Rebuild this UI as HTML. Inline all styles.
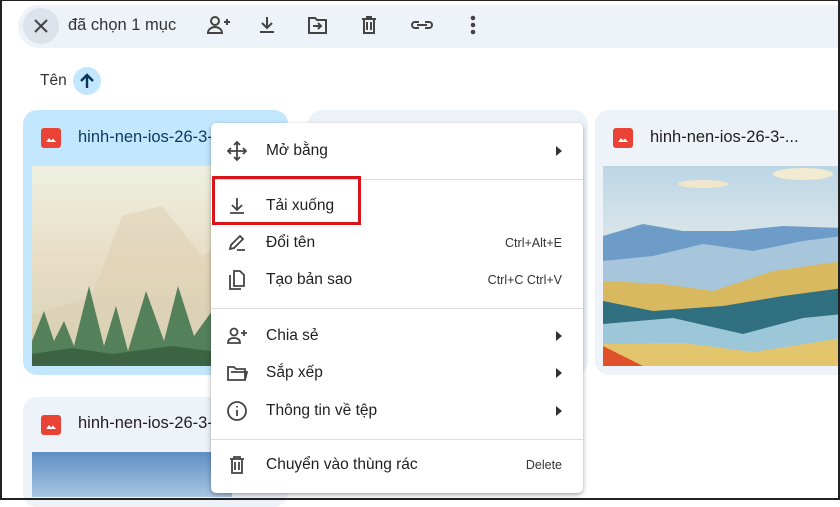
<!DOCTYPE html>
<html><head><meta charset="utf-8"><style>
*{margin:0;padding:0;box-sizing:border-box}
body{width:840px;height:500px;overflow:hidden;background:#fff;font-family:"Liberation Sans",Arial,sans-serif;position:relative;color:#1f1f1f}
.frame{position:absolute;inset:0;border:2px solid #222;border-top-width:1px;border-right-width:2px;z-index:50;pointer-events:none}
.abs{position:absolute}
.bar{left:18px;top:5px;width:840px;height:43px;background:#eef2f9;border-radius:22px}
.close{left:23px;top:8px;width:36px;height:36px;border-radius:50%;background:#dde3ea}
.card{position:absolute;border-radius:14px}
.menu{left:211px;top:123px;width:372px;height:370px;background:#fff;border-radius:5px;box-shadow:0 2px 6px rgba(0,0,0,.25),0 1px 2px rgba(0,0,0,.15);z-index:10}
.it{position:absolute;left:0;width:100%;height:30px;font-size:15.5px;color:#1f1f1f}
.it .t{position:absolute;left:55px;top:6px}
.it svg{position:absolute;left:15px;top:4px}
.it .k{position:absolute;right:21px;top:8px;font-size:12.5px;color:#333}
.it .ar{position:absolute;right:21px;top:10px;width:0;height:0;border-left:6px solid #333;border-top:5px solid transparent;border-bottom:5px solid transparent}
.hr{position:absolute;left:0;width:100%;height:1px;background:#dadce0}
.ficon{width:20px;height:20px;background:#ea4335;border-radius:3px;overflow:hidden}
.title{font-size:16.5px;color:#0b3a5c}
</style></head><body>
<div class="frame"></div>
<div class="abs bar"></div>
<div class="abs close"></div>
<svg class="abs" style="left:31px;top:16px" width="20" height="20" viewBox="0 0 20 20"><path d="M4 4L16 16M16 4L4 16" stroke="#444" stroke-width="2"/></svg>
<div class="abs" style="left:68px;top:16px;font-size:16.5px;color:#333">đã chọn 1 mục</div>
<svg class="abs" style="left:205px;top:13px" width="280" height="24" viewBox="0 0 280 24" fill="none" stroke="#444" stroke-width="2">
<circle cx="10" cy="8" r="4"/><path d="M3 20c0-4 4-6 7-6s7 2 7 6z"/><path d="M19 9h6M22 6v6"/>
<path d="M62 4v11M57 10l5 5 5-5M55 19h14"/>
<path d="M104 5h6l2 2h9v13h-17z"/><path d="M108 13h8M113 10l3 3-3 3"/>
<path d="M157 6h14M162 6V4h4v2M159 6v14h10V6M162 9v8M166 9v8"/>
<path d="M214 9h-4a3 3 0 0 0 0 6h4M220 9h4a3 3 0 0 1 0 6h-4M212 12h10"/>
<circle cx="268" cy="5" r="1.3" fill="#444"/><circle cx="268" cy="12" r="1.3" fill="#444"/><circle cx="268" cy="19" r="1.3" fill="#444"/>
</svg>
<div class="abs" style="left:40px;top:72px;font-size:15.5px;color:#333">Tên</div>
<div class="abs" style="left:73px;top:67px;width:28px;height:28px;border-radius:50%;background:#c2e7ff"></div>
<svg class="abs" style="left:77px;top:71px" width="20" height="20"><path d="M10 17V4M4 10l6-6 6 6" stroke="#0a3558" stroke-width="2.4" fill="none"/></svg>

<div class="card" style="left:23px;top:110px;width:265px;height:265px;background:#c2e7ff"></div>
<svg class="abs" style="left:41px;top:128px" width="20" height="20"><rect width="20" height="20" rx="3" fill="#ea4335"/><path d="M5 14l3-4 2 2.5 2-2 3 3.5z" fill="#fff"/></svg>
<div class="abs title" style="left:78px;top:128px">hinh-nen-ios-26-3-...</div>
<svg class="abs" style="left:32px;top:166px" width="200" height="200" viewBox="0 0 200 200">
<defs><linearGradient id="f" x1="0" y1="0" x2="0" y2="1"><stop offset="0" stop-color="#eef0e0"/><stop offset=".5" stop-color="#e8dcc4"/><stop offset="1" stop-color="#d2d3b6"/></linearGradient></defs>
<rect width="200" height="200" fill="url(#f)"/>
<path d="M60 130L90 50 130 40 170 90 200 70V200H0V150z" fill="#dccdb0" opacity=".45"/>
<path d="M0 200V175l12-30 10 30 10-20 10 25 15-60 15 60 12-40 12 45 18-60 18 50 14-55 16 50 18-25 20 40V200z" fill="#54805a"/>
<path d="M0 200v-12l40-6 40 6 60-8 60 8V200z" fill="#3d6442"/>
</svg>

<div class="card" style="left:308px;top:110px;width:280px;height:265px;background:#eef2f9"></div>

<div class="card" style="left:595px;top:110px;width:260px;height:265px;background:#eef2f9"></div>
<svg class="abs" style="left:613px;top:128px" width="20" height="20"><rect width="20" height="20" rx="3" fill="#ea4335"/><path d="M5 14l3-4 2 2.5 2-2 3 3.5z" fill="#fff"/></svg>
<div class="abs" style="left:650px;top:128px;font-size:16.5px;color:#1f1f1f">hinh-nen-ios-26-3-...</div>
<svg class="abs" style="left:603px;top:166px" width="240" height="200" viewBox="0 0 240 200">
<defs><linearGradient id="s" x1="0" y1="0" x2="0" y2="1"><stop offset="0" stop-color="#bcd6e6"/><stop offset=".6" stop-color="#eef0ea"/></linearGradient></defs>
<rect width="240" height="200" fill="url(#s)"/>
<ellipse cx="200" cy="8" rx="30" ry="6" fill="#f3ead2"/><ellipse cx="100" cy="18" rx="25" ry="4" fill="#f1e6cc"/>
<path d="M0 70L40 58 80 65 130 65 180 60 240 62V200H0z" fill="#6d9cc8"/>
<path d="M0 95L50 90 100 78 150 85 200 75 240 70V200H0z" fill="#a7c6dc"/>
<path d="M0 115L60 118 110 125 170 105 240 95V200H0z" fill="#d9b95f"/>
<path d="M0 135L50 145 120 140 180 130 240 122V200H0z" fill="#2f6f80"/>
<path d="M0 158L70 152 140 168 200 152 240 148V200H0z" fill="#9cc7d8"/>
<path d="M0 178L80 177 150 186 240 172V200H0z" fill="#e3c56e"/>
<path d="M0 180L40 200H0z" fill="#e0502a"/>
</svg>

<div class="card" style="left:23px;top:397px;width:265px;height:110px;background:#eef2f9"></div>
<svg class="abs" style="left:41px;top:415px" width="20" height="20"><rect width="20" height="20" rx="3" fill="#ea4335"/><path d="M5 14l3-4 2 2.5 2-2 3 3.5z" fill="#fff"/></svg>
<div class="abs" style="left:78px;top:414px;font-size:16.5px;color:#1f1f1f">hinh-nen-ios-26-3-...</div>
<div class="abs" style="left:32px;top:452px;width:200px;height:45px;background:linear-gradient(#5d8fc4,#a9c6e2)"></div>

<div class="abs menu">
<div class="it" style="top:13px"><svg width="22" height="22" viewBox="0 0 22 22" fill="none" stroke="#444" stroke-width="1.8"><path d="M11 2v18M2 11h18M8 5l3-3 3 3M8 17l3 3 3-3M5 8l-3 3 3 3M17 8l3 3-3 3"/></svg><span class="t">Mở bằng</span><span class="ar"></span></div>
<div class="hr" style="top:56px"></div>
<div class="it" style="top:68px"><svg width="22" height="22" viewBox="0 0 22 22" fill="none" stroke="#444" stroke-width="1.8"><path d="M11 3v11M6 10l5 5 5-5M4 18h14"/></svg><span class="t">Tải xuống</span></div>
<div class="it" style="top:105px"><svg width="22" height="22" viewBox="0 0 22 22" fill="none" stroke="#444" stroke-width="1.8"><path d="M4 17l1-4 9-9 3 3-9 9zM11 18h8"/></svg><span class="t">Đổi tên</span><span class="k">Ctrl+Alt+E</span></div>
<div class="it" style="top:142px"><svg width="22" height="22" viewBox="0 0 22 22" fill="none" stroke="#444" stroke-width="1.8"><path d="M4 6v14h11M8 2h6l4 4v11H8z"/></svg><span class="t">Tạo bản sao</span><span class="k">Ctrl+C Ctrl+V</span></div>
<div class="hr" style="top:185px"></div>
<div class="it" style="top:198px"><svg width="22" height="22" viewBox="0 0 22 22" fill="none" stroke="#444" stroke-width="1.8"><circle cx="8" cy="7" r="3.5"/><path d="M2 18c0-4 3-5 6-5s6 1 6 5z"/><path d="M15 8h6M18 5v6"/></svg><span class="t">Chia sẻ</span><span class="ar"></span></div>
<div class="it" style="top:235px"><svg width="22" height="22" viewBox="0 0 22 22" fill="none" stroke="#444" stroke-width="1.8"><path d="M2 5h6l2 2h9v11H2zM5 10h16l-2 8"/></svg><span class="t">Sắp xếp</span><span class="ar"></span></div>
<div class="it" style="top:273px"><svg width="22" height="22" viewBox="0 0 22 22" fill="none" stroke="#444" stroke-width="1.8"><circle cx="11" cy="11" r="9"/><path d="M11 10v6M11 6v1.5"/></svg><span class="t">Thông tin về tệp</span><span class="ar"></span></div>
<div class="hr" style="top:316px"></div>
<div class="it" style="top:327px"><svg width="22" height="22" viewBox="0 0 22 22" fill="none" stroke="#444" stroke-width="1.8"><path d="M4 5h14M8 5V3h6v2M6 5v14h10V5M9 8v8M13 8v8"/></svg><span class="t">Chuyển vào thùng rác</span><span class="k">Delete</span></div>
</div>
<div class="abs" style="left:212px;top:176px;width:149px;height:49px;border:3px solid #d9141b;z-index:20"></div>
</body></html>
